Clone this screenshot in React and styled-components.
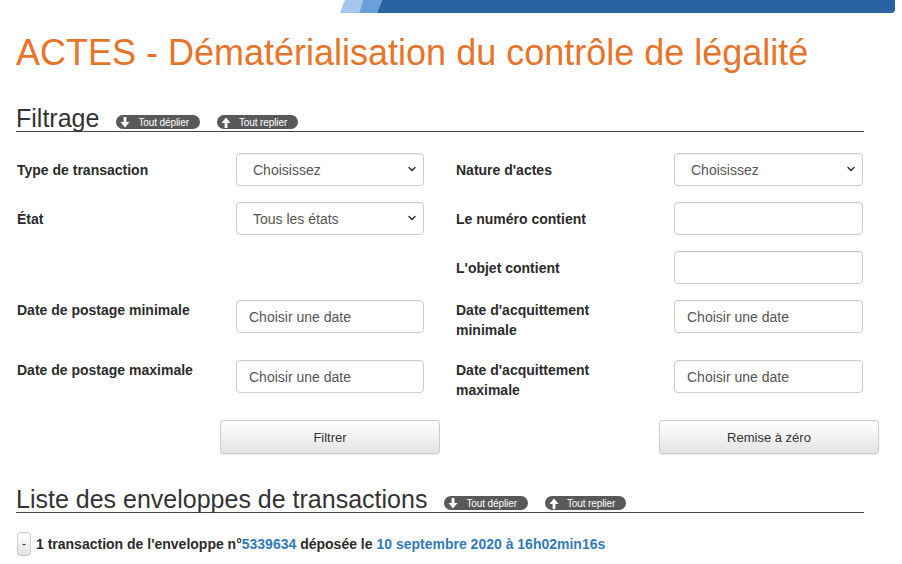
import styled, { createGlobalStyle } from "styled-components";
import { ChevronDown } from "lucide-react";

const GlobalStyle = createGlobalStyle`
    body {
        margin: 0;
        background: #fff;
        font-family: "Liberation Sans", Arial, sans-serif;
        color: #333;
    }
`;

const Banner = () => (
    <SBanner>
        <svg width="556" height="13" viewBox="0 0 556 13">
            <polygon points="5,0 23,0 19,13 0,13" fill="#a6c6ee" />
            <polygon points="23,0 42,0 37,13 19,13" fill="#6b9fda" />
            <path d="M42 0 H555 V9 Q555 13 551 13 H37 Z" fill="#2a62a3" />
        </svg>
    </SBanner>
);

const Arrow = ({ up }) => (
    <svg width="10" height="11" viewBox="0 0 10 11" style={up ? { transform: "rotate(180deg)" } : undefined}>
        <rect x="3.6" y="0" width="2.8" height="6" fill="#fff" />
        <polygon points="0.5,5 9.5,5 5,10.5" fill="#fff" />
    </svg>
);

const Toggles = () => (
    <>
        <SBadge><Arrow />Tout déplier</SBadge>
        <SBadge><Arrow up />Tout replier</SBadge>
    </>
);

const SelectField = ({ value }) => (
    <SSelectWrap>
        <SSelect defaultValue={value}>
            <option>{value}</option>
        </SSelect>
        <SChevron><ChevronDown size={12} strokeWidth={3} /></SChevron>
    </SSelectWrap>
);

export default function App() {
    return (
        <>
            <GlobalStyle />
            <Banner />
            <SPage>
                <STitle>ACTES - Dématérialisation du contrôle de légalité</STitle>

                <SHeading>
                    <SHeadingText>Filtrage</SHeadingText>
                    <Toggles />
                </SHeading>

                <SForm>
                    <SLabel>Type de transaction</SLabel>
                    <SelectField value="Choisissez" />
                    <span />
                    <SLabel>Nature d'actes</SLabel>
                    <SelectField value="Choisissez" />

                    <SLabel>État</SLabel>
                    <SelectField value="Tous les états" />
                    <span />
                    <SLabel>Le numéro contient</SLabel>
                    <SInput />

                    <span />
                    <span />
                    <span />
                    <SLabel>L'objet contient</SLabel>
                    <SInput />

                    <SLabel $top>Date de postage minimale</SLabel>
                    <SInput $date placeholder="Choisir une date" />
                    <span />
                    <SLabel $top>Date d'acquittement<br />minimale</SLabel>
                    <SInput $date placeholder="Choisir une date" />

                    <SLabel $top>Date de postage maximale</SLabel>
                    <SInput $date placeholder="Choisir une date" />
                    <span />
                    <SLabel $top>Date d'acquittement<br />maximale</SLabel>
                    <SInput $date placeholder="Choisir une date" />
                </SForm>

                <SActions>
                    <SButton $col={2}>Filtrer</SButton>
                    <SButton $col={4}>Remise à zéro</SButton>
                </SActions>

                <SHeading $list>
                    <SHeadingText>Liste des enveloppes de transactions</SHeadingText>
                    <Toggles />
                </SHeading>

                <SEnvelope>
                    <SSmallButton>-</SSmallButton>
                    <span>
                        1 transaction de l'enveloppe n°<SLink>5339634</SLink> déposée le{" "}
                        <SLink>10 septembre 2020 à 16h02min16s</SLink>
                    </span>
                </SEnvelope>
            </SPage>
        </>
    );
}

const SBanner = styled.div`
    display: flex;
    padding-left: 340px;
    height: 13px;
    svg {
        display: block;
    }
`;
const SPage = styled.div`
    padding-left: 16px;
    width: 864px;
`;
const STitle = styled.h1`
    margin: 19px 0 0;
    font-size: 36px;
    line-height: 41px;
    font-weight: normal;
    color: #e8742a;
`;
const SHeading = styled.div`
    display: flex;
    align-items: flex-end;
    gap: 17px;
    width: 848px;
    margin-top: 32px;
    border-bottom: 1px solid #444;
`;
const SHeadingText = styled.h2`
    margin: 0;
    font-size: 25px;
    line-height: 26px;
    font-weight: normal;
    color: #333;
`;
const SBadge = styled.span`
    display: inline-flex;
    align-items: center;
    gap: 8px;
    height: 14px;
    margin-bottom: 2px;
    padding: 0 11px 0 4px;
    border-radius: 7px;
    background: #595959;
    color: #fff;
    font-size: 10px;
    letter-spacing: -0.1px;
    white-space: nowrap;
`;
const SForm = styled.div`
    display: grid;
    grid-template-columns: 220px 188px 31px 219px 189px;
    row-gap: 16px;
    margin-top: 21px;
`;
const SLabel = styled.div`
    padding: ${(p) => (p.$top ? "0 0 4px 1px" : "7px 0 0 1px")};
    font-size: 14px;
    line-height: 20px;
    font-weight: bold;
    color: #2b2b2b;
`;
const SSelectWrap = styled.div`
    position: relative;
    height: 33px;
`;
const SSelect = styled.select`
    appearance: none;
    width: 100%;
    height: 33px;
    padding: 0 24px 0 16px;
    border: 1px solid #ccc;
    border-radius: 4px;
    background: #fff;
    font-family: "Liberation Sans", Arial, sans-serif;
    font-size: 14px;
    color: #555;
    box-shadow: inset 0 1px 1px rgba(0, 0, 0, 0.05);
`;
const SChevron = styled.span`
    position: absolute;
    right: 6px;
    top: 10px;
    color: #333;
    pointer-events: none;
    svg {
        display: block;
    }
`;
const SInput = styled.input`
    box-sizing: border-box;
    width: 100%;
    height: 33px;
    padding: 0 12px;
    border: 1px solid #ccc;
    border-radius: 4px;
    font-family: "Liberation Sans", Arial, sans-serif;
    font-size: 14px;
    color: #555;
    box-shadow: inset 0 1px 1px rgba(0, 0, 0, 0.05);
    &::placeholder {
        color: #555;
    }
`;
const SActions = styled.div`
    display: grid;
    grid-template-columns: 204px 220px 219px 220px;
    margin-top: 16px;
`;
const SButton = styled.button`
    grid-column: ${(p) => p.$col};
    height: 34px;
    border: 1px solid #ccc;
    border-radius: 3px;
    background: linear-gradient(#fff, #e4e4e4);
    box-shadow: 0 1px 1px rgba(0, 0, 0, 0.08);
    font-family: "Liberation Sans", Arial, sans-serif;
    font-size: 13px;
    color: #333;
`;
const SEnvelope = styled.div`
    display: flex;
    align-items: center;
    gap: 5px;
    margin-top: 19px;
    padding-left: 1px;
    font-size: 14px;
    font-weight: bold;
    color: #2b2b2b;
`;
const SSmallButton = styled.button`
    width: 14px;
    height: 24px;
    padding: 0;
    border: 1px solid #ccc;
    border-radius: 3px;
    background: linear-gradient(#fff, #e2e2e2);
    font-family: "Liberation Sans", Arial, sans-serif;
    font-size: 12px;
    color: #333;
`;
const SLink = styled.span`
    color: #337ab7;
`;
